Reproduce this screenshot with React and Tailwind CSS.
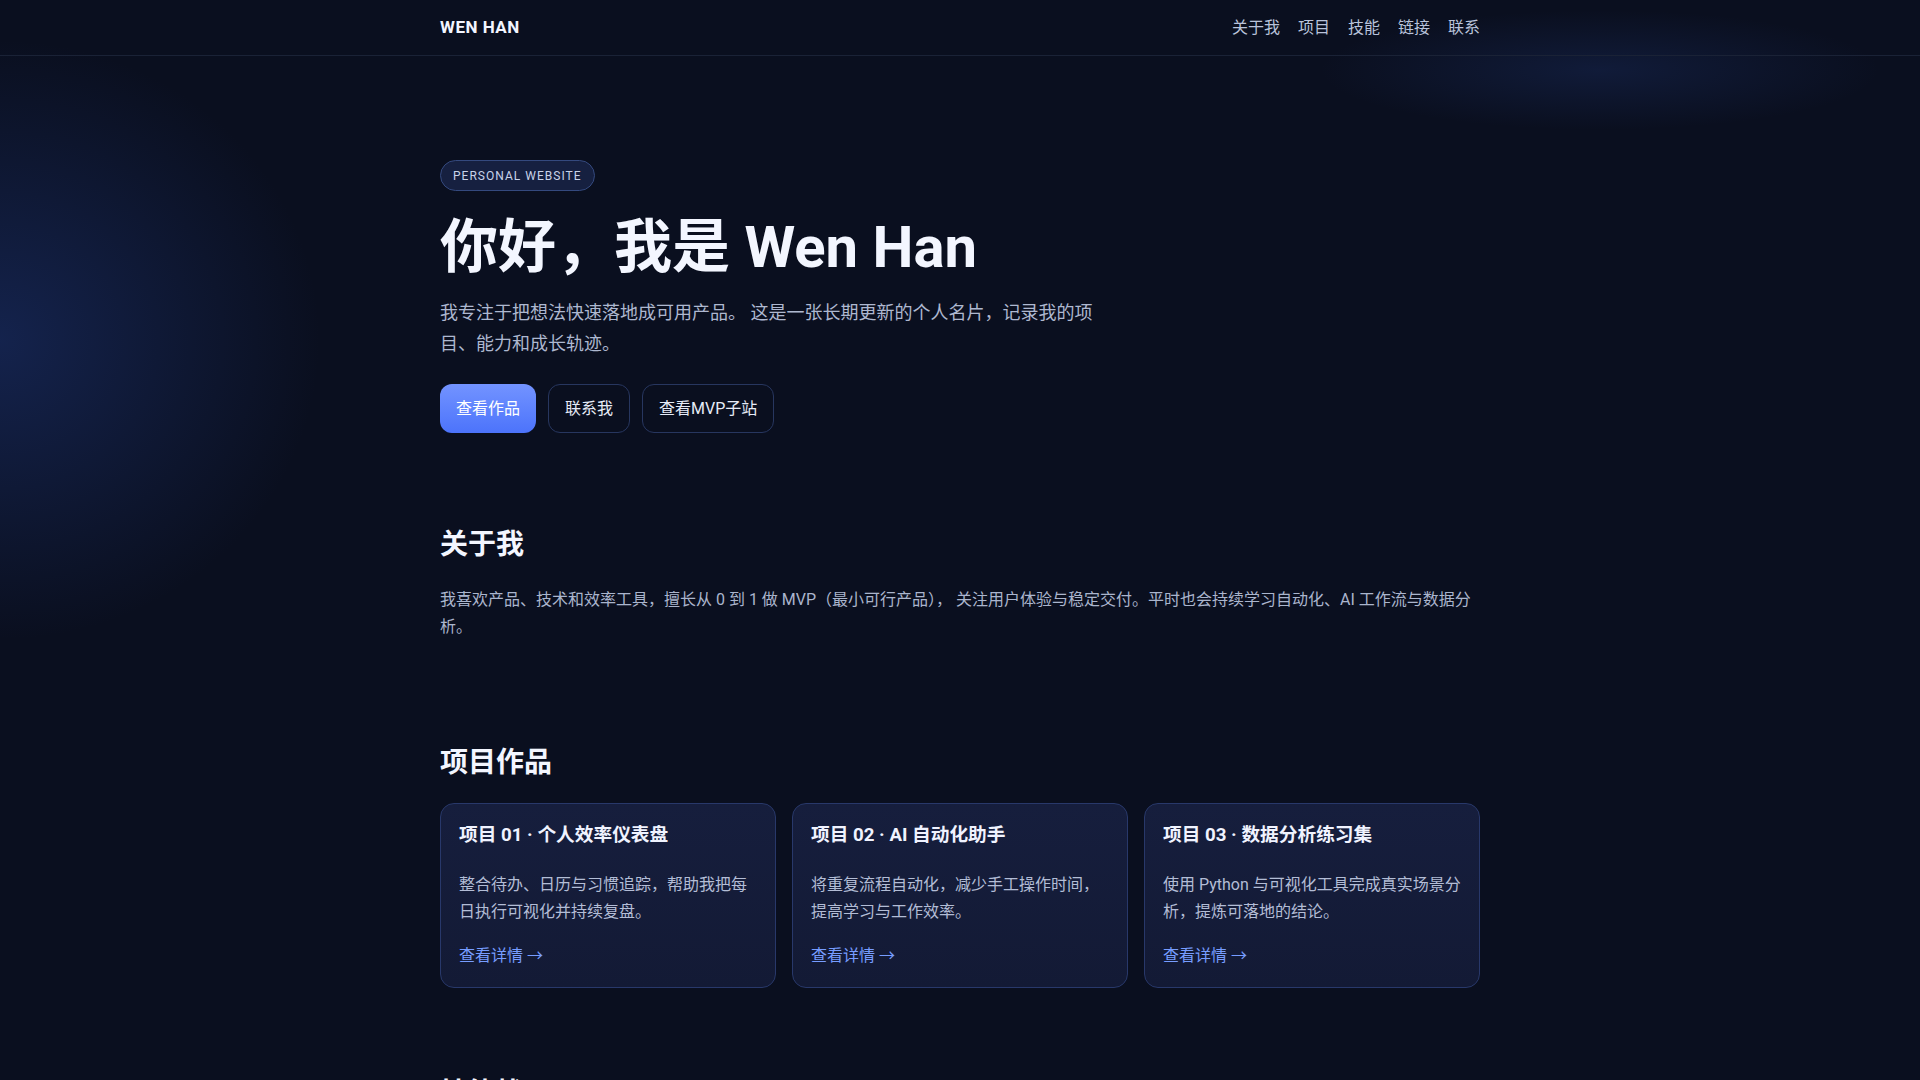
import React from "react";

const navLinks = ["关于我", "项目", "技能", "链接", "联系"];

const projects = [
  {
    title: "项目 01 · 个人效率仪表盘",
    desc: "整合待办、日历与习惯追踪，帮助我把每日执行可视化并持续复盘。",
  },
  {
    title: "项目 02 · AI 自动化助手",
    desc: "将重复流程自动化，减少手工操作时间，提高学习与工作效率。",
  },
  {
    title: "项目 03 · 数据分析练习集",
    desc: "使用 Python 与可视化工具完成真实场景分析，提炼可落地的结论。",
  },
];

const App = () => {
  return (
    <div
      className="min-h-screen bg-[#0a0f1f] text-[#e6ebf7] bg-[radial-gradient(ellipse_320px_300px_at_0px_340px,rgba(34,62,140,0.42),transparent),radial-gradient(ellipse_280px_60px_at_1600px_70px,rgba(40,70,150,0.22),transparent)]"
      style={{ fontFamily: 'Roboto, "Noto Sans CJK SC", sans-serif' }}
    >
      {/* Header */}
      <header className="h-[56px] border-b border-[#1a2236]">
        <div className="mx-auto flex h-full w-[1040px] items-center justify-between">
          <div className="text-[17px] font-bold tracking-[0.03em] text-[#f2f5ff]">WEN HAN</div>
          <nav className="flex gap-[18px] text-[16px] text-[#b9c3db]">
            {navLinks.map((l) => (
              <a key={l} href="#">
                {l}
              </a>
            ))}
          </nav>
        </div>
      </header>

      <main className="mx-auto w-[1040px]">
        {/* Hero */}
        <section className="pt-[104px]">
          <span className="inline-flex h-[31px] items-center rounded-full border border-[#34497e] bg-[#162040] px-3 text-[12px] tracking-[0.085em] text-[#c9d3ea]">
            PERSONAL WEBSITE
          </span>
          <h1 className="mt-[23px] text-[58px] font-bold leading-[66px] text-[#f3f6ff]">
            你好，我是 Wen Han
          </h1>
          <p className="mt-[17px] max-w-[660px] text-[18px] leading-[31px] text-[#aeb8d0]">
            我专注于把想法快速落地成可用产品。 这是一张长期更新的个人名片，记录我的项目、能力和成长轨迹。
          </p>
          <div className="mt-[25px] flex gap-3">
            <button className="h-[49px] rounded-[12px] bg-gradient-to-b from-[#7393ff] to-[#4c73fb] px-4 text-[16px] text-white">
              查看作品
            </button>
            <button className="h-[49px] rounded-[12px] border border-[#27365f] px-4 text-[16px] text-[#e6ebf7]">
              联系我
            </button>
            <button className="h-[49px] rounded-[12px] border border-[#27365f] px-4 text-[16px] text-[#e6ebf7]">
              查看MVP子站
            </button>
          </div>
        </section>

        {/* About */}
        <section className="mt-[94px]">
          <h2 className="text-[28px] font-bold leading-[36px] text-[#f3f6ff]">关于我</h2>
          <p className="mt-[23px] text-[16px] leading-[27px] text-[#aab5cd]">
            我喜欢产品、技术和效率工具，擅长从 0 到 1 做 MVP（最小可行产品）， 关注用户体验与稳定交付。平时也会持续学习自动化、AI 工作流与数据分析。
          </p>
        </section>

        {/* Projects */}
        <section className="mt-[105px]">
          <h2 className="text-[28px] font-bold leading-[36px] text-[#f3f6ff]">项目作品</h2>
          <div className="mt-[22px] grid grid-cols-3 gap-4">
            {projects.map((p) => (
              <div
                key={p.title}
                className="rounded-[14px] border border-[#28386a] bg-gradient-to-b from-[#161e3d] to-[#131a35] px-[18px] pt-[18px] pb-[19px]"
              >
                <h3 className="text-[18.7px] font-bold leading-[27px] text-[#f0f3ff]">{p.title}</h3>
                <p className="mt-[22px] text-[16px] leading-[27px] text-[#b3bdd6]">{p.desc}</p>
                <a href="#" className="mt-[17px] block text-[16px] leading-[24px] text-[#779dff]">
                  查看详情 <span style={{ fontFamily: '"Noto Sans CJK SC", sans-serif' }}>→</span>
                </a>
              </div>
            ))}
          </div>
        </section>

        {/* Skills */}
        <section className="mt-[88px] pb-24">
          <h2 className="text-[28px] font-bold leading-[36px] text-[#f3f6ff]">技能栈</h2>
        </section>
      </main>
    </div>
  );
};

export default App;
